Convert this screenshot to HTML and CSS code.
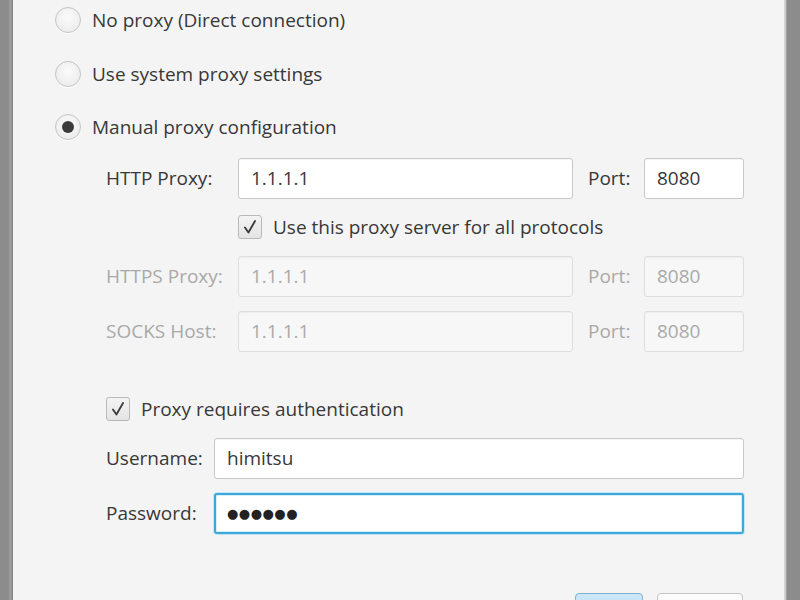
FILE: index.html
```html
<!DOCTYPE html>
<html>
<head>
<meta charset="utf-8">
<link rel="stylesheet" href="styles.css">
</head>
<body>
<div class="frame">
  <div class="edge-left"></div>
  <main class="dialog">
    <div class="radio-row"><span class="radio"></span><span class="txt">No proxy (Direct connection)</span></div>
    <div class="radio-row"><span class="radio"></span><span class="txt">Use system proxy settings</span></div>
    <div class="radio-row"><span class="radio selected"></span><span class="txt">Manual proxy configuration</span></div>

    <div class="manual">
      <div class="row">
        <label class="lbl">HTTP Proxy:</label>
        <div class="field host">1.1.1.1</div>
        <label class="lbl port">Port:</label>
        <div class="field portf">8080</div>
      </div>

      <div class="check-row all-protocols">
        <span class="check"><svg viewBox="0 0 24 24" width="24" height="24"><path d="M6.5 12.5 L10.3 18 L17.5 5.5" fill="none" stroke="#3c3c3c" stroke-width="2" stroke-linecap="round" stroke-linejoin="round"/></svg></span>
        <span class="txt">Use this proxy server for all protocols</span>
      </div>

      <div class="row">
        <label class="lbl dis">HTTPS Proxy:</label>
        <div class="field host dis">1.1.1.1</div>
        <label class="lbl port dis">Port:</label>
        <div class="field portf dis">8080</div>
      </div>

      <div class="row gap">
        <label class="lbl dis">SOCKS Host:</label>
        <div class="field host dis">1.1.1.1</div>
        <label class="lbl port dis">Port:</label>
        <div class="field portf dis">8080</div>
      </div>

      <div class="check-row auth-check">
        <span class="check"><svg viewBox="0 0 24 24" width="24" height="24"><path d="M6.5 12.5 L10.3 18 L17.5 5.5" fill="none" stroke="#3c3c3c" stroke-width="2" stroke-linecap="round" stroke-linejoin="round"/></svg></span>
        <span class="txt">Proxy requires authentication</span>
      </div>

      <div class="row user">
        <label class="lbl short">Username:</label>
        <div class="field wide">himitsu</div>
      </div>
      <div class="row gap">
        <label class="lbl short">Password:</label>
        <div class="field wide focus"><span class="dots">●●●●●●</span></div>
      </div>
    </div>

    <div class="buttons">
      <button class="btn ok">OK</button>
      <button class="btn cancel">Cancel</button>
    </div>
  </main>
  <div class="edge-right"></div>
</div>
</body>
</html>
```
FILE: styles.css
```css
html, body {
  margin: 0;
  padding: 0;
  width: 800px;
  height: 600px;
  overflow: hidden;
  background: #f4f4f4;
  font-family: "Open Sans", "Noto Sans", sans-serif;
  font-size: 19px;
  color: #383838;
}
.frame {
  display: flex;
  height: 600px;
  overflow: hidden;
}
.edge-left {
  width: 13px;
  flex: none;
  background: linear-gradient(to right, #8c8c8c 0, #8c8c8c 9px, #a8a8a8 10px, #7e7e7e 13px);
}
.edge-right {
  width: 16px;
  flex: none;
  background: linear-gradient(to right, #d8d8d8 0, #d8d8d8 1px, #b8b8b8 2px, #8c8c8c 3px, #8c8c8c 100%);
}
.dialog {
  flex: 1;
  padding: 7px 0 0 42px;
  box-sizing: border-box;
}
.radio-row {
  display: flex;
  align-items: center;
  height: 26px;
  margin-bottom: 27.5px;
}
.radio {
  width: 24px;
  height: 24px;
  border-radius: 50%;
  border: 1px solid #c4c4c4;
  background: radial-gradient(circle at 50% 40%, #fbfbfb 0, #ececec 80%);
  box-shadow: 0 1px 0 rgba(255,255,255,0.8);
  position: relative;
  flex: none;
}
.radio.selected::after {
  content: "";
  position: absolute;
  left: 6px;
  top: 6px;
  width: 12px;
  height: 12px;
  border-radius: 50%;
  background: #3b3b3b;
}
.radio-row .txt {
  margin-left: 11px;
  white-space: nowrap;
}
.manual {
  margin: -10px 0 0 51px;
}
.row {
  display: flex;
  align-items: center;
  height: 41px;
}
.row.gap {
  margin-top: 14px;
}
.lbl {
  white-space: nowrap;
  width: 132px;
  flex: none;
}
.lbl.short {
  width: 108px;
}
.lbl.port {
  width: 56px;
  padding-left: 15px;
}
.dis {
  color: #a9a9a9;
}
.field {
  height: 41px;
  box-sizing: border-box;
  border: 1px solid #c9c9c9;
  border-radius: 3px;
  background: #fff;
  box-shadow: inset 0 1px 1px rgba(0,0,0,0.04);
  padding: 0 12px;
  display: flex;
  align-items: center;
  color: #383838;
  flex: none;
}
.field.host {
  width: 335px;
}
.field.portf {
  width: 100px;
}
.field.wide {
  width: 530px;
}
.field.dis {
  background: #f7f7f7;
  border-color: #dedede;
  color: #aaa;
}
.check-row {
  display: flex;
  align-items: center;
}
.all-protocols {
  height: 57px;
  margin-left: 132px;
  padding-bottom: 1px;
  box-sizing: border-box;
}
.check {
  width: 24px;
  height: 24px;
  box-sizing: border-box;
  border: 1px solid #b9b9b9;
  border-radius: 3px;
  background: linear-gradient(#f4f4f4, #e4e4e4);
  display: flex;
  align-items: center;
  justify-content: center;
  flex: none;
}
.check svg {
  display: block;
}
.check-row .txt {
  margin-left: 11px;
  white-space: nowrap;
}
.auth-check {
  height: 24px;
  margin-top: 45px;
}
.row.user {
  margin-top: 17px;
}
.field.focus {
  border: 2px solid #3fa7dc;
  box-shadow: 0 0 0 1px #c4e5f5, inset 0 0 0 1px #d7eef9;
  padding-left: 11px;
}
.dots {
  font-family: "DejaVu Sans", sans-serif;
  font-size: 13px;
  letter-spacing: 0.5px;
  color: #222;
}
.buttons {
  display: flex;
  gap: 14px;
  margin: 59px 0 0 520px;
}
.btn {
  height: 60px;
  border-radius: 4px;
  font-family: inherit;
  font-size: 19px;
  color: #383838;
  padding: 14px 0 0;
  flex: none;
}
.btn.ok {
  width: 68px;
  border: 1px solid #7fb3d2;
  background: linear-gradient(#cbe7f8, #b8ddf3);
}
.btn.cancel {
  width: 86px;
  border: 1px solid #c4c4c4;
  background: linear-gradient(#fcfcfc, #ececec);
}
```
